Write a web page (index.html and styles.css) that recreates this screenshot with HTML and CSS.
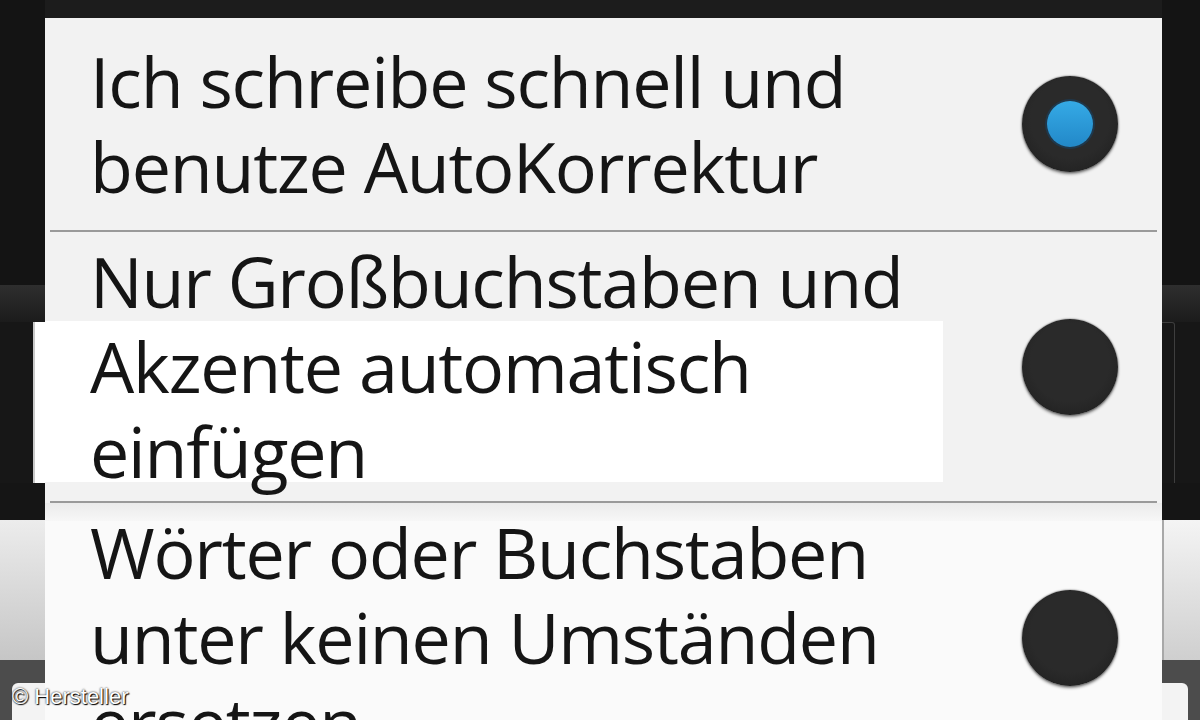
FILE: index.html
```html
<!DOCTYPE html>
<html lang="de">
<head>
    <meta charset="UTF-8">
    <meta name="viewport" content="width=device-width, initial-scale=1.0">
    <title>AutoKorrektur</title>
    <link rel="stylesheet" href="styles.css">
</head>
<body>

    <div class="screen">
        <div class="edge edge-left">
            <div class="band band-top"></div>
            <div class="band band-bar"></div>
            <div class="band band-field"><div class="field"></div></div>
            <div class="band band-gap"></div>
            <div class="band band-suggest"></div>
            <div class="band band-keys"><div class="key"></div></div>
        </div>

        <div class="dialog">
            <div class="dialog-title"></div>
            <ul class="options">
                <li class="option">
                    <span class="label">Ich schreibe schnell und benutze AutoKorrektur</span>
                    <span class="radio checked"></span>
                </li>
                <li class="option option-field">
                    <span class="label">Nur Großbuchstaben und Akzente automatisch einfügen</span>
                    <span class="radio"></span>
                </li>
                <li class="option option-keys">
                    <span class="label">Wörter oder Buchstaben unter keinen Umständen ersetzen</span>
                    <span class="radio"></span>
                </li>
            </ul>
        </div>

        <div class="edge edge-right">
            <div class="band band-top"></div>
            <div class="band band-bar"></div>
            <div class="band band-field"><div class="field"></div></div>
            <div class="band band-gap"></div>
            <div class="band band-suggest"></div>
            <div class="band band-keys"><div class="key"></div></div>
        </div>
    </div>

    <div class="credit">© Hersteller</div>

</body>
</html>
```

FILE: styles.css
```css
body {
    margin: 0;
    background: #151515;
    font-family: "Open Sans", "Noto Sans", sans-serif;
    height: 720px;
    overflow: hidden;
}
.screen {
    display: grid;
    grid-template-columns: 45px 1fr 38px;
    height: 720px;
}

/* what is left of the screen behind the dialog */
.edge {
    display: flex;
    flex-direction: column;
}
.band-top {
    height: 285px;
    background: #141414;
}
.band-bar {
    height: 37px;
    background: linear-gradient(#2e2e2e, #1c1c1c);
}
.band-field {
    height: 161px;
    background: #171717;
}
.edge-left .field {
    height: 100%;
    margin-left: 33px;
    background: #fff;
    border-left: 2px solid #c9c9c9;
}
.edge-right .field {
    width: 12px;
    height: 163px;
    border: 1px solid #3e3e3e;
    border-left: none;
    border-radius: 0 3px 3px 0;
}
.band-gap {
    height: 37px;
    background: #151515;
}
.band-suggest {
    height: 140px;
    background: linear-gradient(#ececec, #c6c6c6);
}
.edge-right .band-suggest {
    background: linear-gradient(#f4f4f4, #cfcfcf);
    border-left: 2px solid #a8a8a8;
}
.band-keys {
    flex: 1;
    background: #4c4c4c;
    padding-top: 23px;
}
.band-keys .key {
    height: 100%;
    background: #f3f3f3;
}
.edge-left .key {
    margin-left: 12px;
    border-radius: 6px 0 0 0;
}
.edge-right .key {
    margin-right: 12px;
    border-radius: 0 6px 0 0;
}

/* dialog */
.dialog {
    background: #f2f2f2;
    overflow: hidden;
}
.dialog-title {
    height: 18px;
    background: #1c1c1c;
}
.options {
    list-style: none;
    margin: 0;
    padding: 0;
}
.option {
    position: relative;
    display: flex;
    align-items: center;
    min-height: 214px;
    padding: 7px 44px 9px 45px;
    box-sizing: border-box;
}
.option::after {
    content: "";
    position: absolute;
    left: 5px;
    right: 5px;
    bottom: 0;
    height: 2px;
    background: #9a9a9a;
}
.option-field {
    background: linear-gradient(#fff, #fff) no-repeat 0 89px / 898px 161px;
}
.option-keys {
    background: linear-gradient(#ebebeb, #f7f7f7) no-repeat 0 0 / 100% 18px, #fafafa;
}
.label {
    flex: 1;
    max-width: 880px;
    font-size: 70px;
    letter-spacing: -1.2px;
    line-height: 85px;
    color: #151515;
}
.radio {
    flex: none;
    width: 96px;
    height: 96px;
    margin-left: auto;
    border-radius: 50%;
    background: radial-gradient(circle at 50% 45%, #2a2a2a 55%, #1b1b1b 100%);
    box-shadow: 0 2px 3px rgba(0, 0, 0, 0.45), 0 0 2px rgba(0, 0, 0, 0.6);
    display: flex;
    align-items: center;
    justify-content: center;
}
.radio.checked::before {
    content: "";
    width: 46px;
    height: 46px;
    border-radius: 50%;
    background: linear-gradient(#35aae6, #2288c8);
    box-shadow: 0 0 0 2px rgba(20, 70, 110, 0.5);
}

.credit {
    position: absolute;
    left: 12px;
    bottom: 10px;
    font-family: "Liberation Sans", Arial, sans-serif;
    font-size: 22px;
    color: #fff;
    text-shadow: 0 0 2px #000, 1px 1px 1px #000;
}
```
